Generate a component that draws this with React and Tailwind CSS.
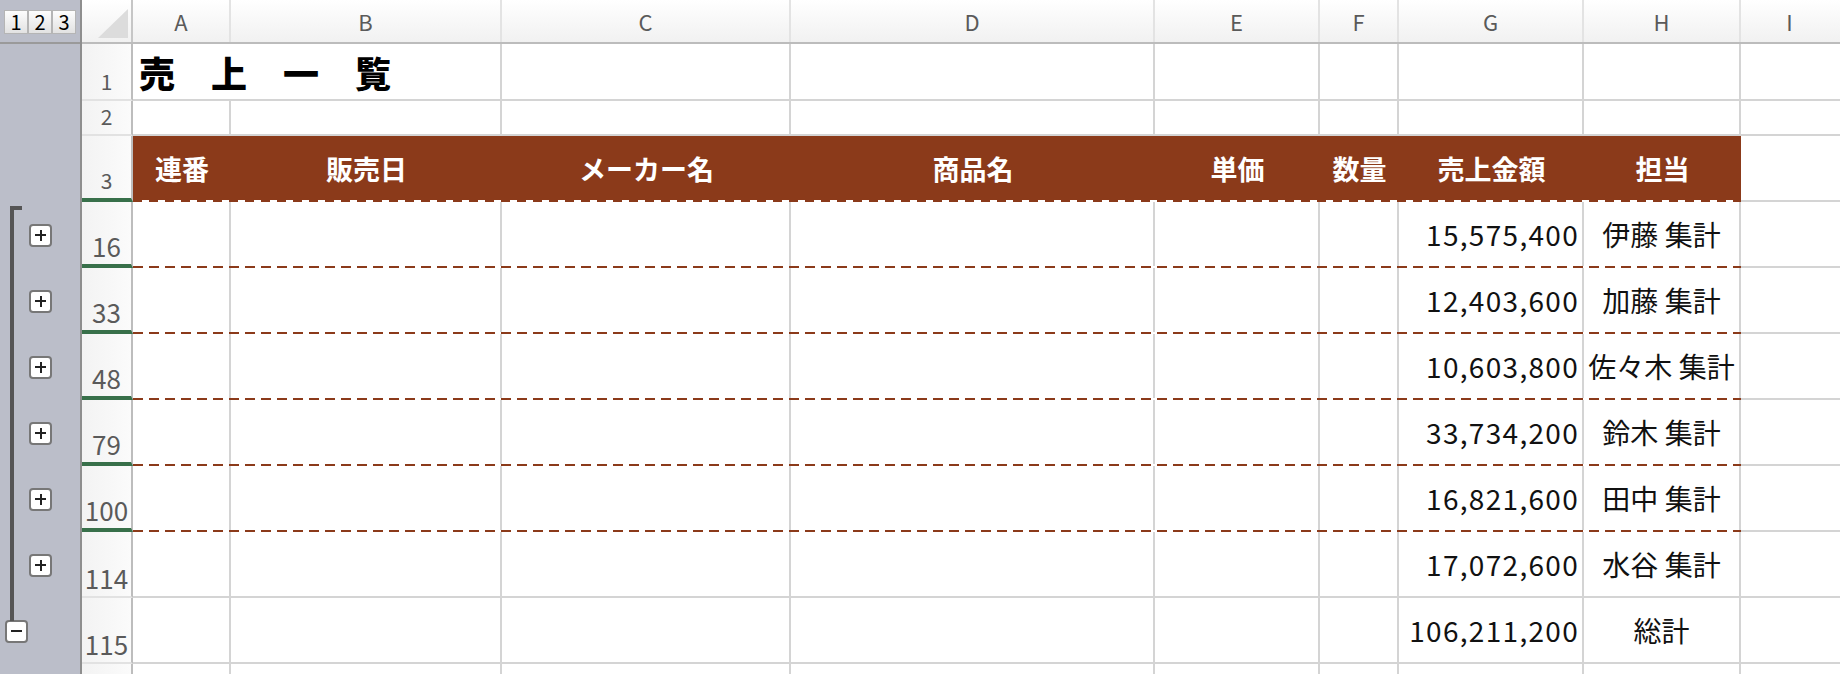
import clsx from "clsx";

const COLS = [
  { w: "w-[98px]", label: "A", head: "連番" },
  { w: "w-[271px]", label: "B", head: "販売日" },
  { w: "w-[289px]", label: "C", head: "メーカー名" },
  { w: "w-[364px]", label: "D", head: "商品名" },
  { w: "w-[165px]", label: "E", head: "単価" },
  { w: "w-[79px]", label: "F", head: "数量" },
  { w: "w-[185px]", label: "G", head: "売上金額" },
  { w: "w-[157px]", label: "H", head: "担当" },
];

const totals = [
  { n: "16", amount: "15,575,400", name: "伊藤 集計", dashed: true },
  { n: "33", amount: "12,403,600", name: "加藤 集計", dashed: true },
  { n: "48", amount: "10,603,800", name: "佐々木 集計", dashed: true },
  { n: "79", amount: "33,734,200", name: "鈴木 集計", dashed: true },
  { n: "100", amount: "16,821,600", name: "田中 集計", dashed: true },
  { n: "114", amount: "17,072,600", name: "水谷 集計", dashed: false },
  { n: "115", amount: "106,211,200", name: "総計", dashed: false },
];

function RowHead({ n, big, green }) {
  return (
    <div
      className={clsx(
        "flex w-[51px] shrink-0 items-end justify-center border-r-2 border-r-[#bdbdbd] bg-linear-to-r from-[#f3f3f3] to-[#fbfbfb] leading-none text-[#5a5a5a]",
        big ? "pb-[5px] text-[26px]" : "pb-[7px] text-[21px]",
        green ? "border-b-4 border-b-[#38704a]" : "border-b-2 border-b-[#e2e2e2]"
      )}
    >
      {n}
    </div>
  );
}

function Line({ kind }) {
  return (
    <div className="flex h-[2px] shrink-0">
      <div
        className={clsx(
          "w-[1608px] shrink-0",
          kind === "dash" && "bg-[repeating-linear-gradient(90deg,#8b3a1a_0_10px,transparent_10px_16px)]",
          kind === "head" && "bg-[repeating-linear-gradient(90deg,#8b3a1a_0_9px,#ffffff_9px_16px)]",
          kind === "gray" && "bg-[#d4d4d4]"
        )}
      />
      <div className="flex-1 bg-[#d4d4d4]" />
    </div>
  );
}

function Row({ n, h, big, green, line = "gray", children }) {
  return (
    <div className={clsx("flex shrink-0", h)}>
      <RowHead n={n} big={big} green={green} />
      <div className="flex flex-1 flex-col">
        <div className="flex flex-1">{children}</div>
        <Line kind={line} />
      </div>
    </div>
  );
}

function Cell({ w, className, children }) {
  return (
    <div className={clsx("flex shrink-0 items-center border-r-2 border-[#d4d4d4]", w, className)}>
      {children}
    </div>
  );
}

function EmptyCells({ from = 0 }) {
  return (
    <>
      {COLS.slice(from).map((c) => (
        <Cell key={c.label} w={c.w} />
      ))}
      <div className="flex-1" />
    </>
  );
}

function OutlineButton({ minus }) {
  return (
    <div className="relative h-[23px] w-[23px] rounded-[4px] border-2 border-[#777] bg-white">
      <div className="absolute left-[4px] top-[8px] h-[2px] w-[11px] bg-[#222]" />
      {!minus && <div className="absolute left-[8.5px] top-[3.5px] h-[11px] w-[2px] bg-[#222]" />}
    </div>
  );
}

function OutlinePanel() {
  return (
    <div className="relative flex w-[82px] shrink-0 flex-col border-r-2 border-[#8e8e8e] bg-[#bbbec9]">
      <div className="flex h-[44px] shrink-0 items-start border-b-2 border-[#9a9a9a] pl-[4px] pt-[10px]">
        {["1", "2", "3"].map((d) => (
          <div
            key={d}
            className="flex h-[24px] w-[24px] items-center justify-center border border-[#b5b5b5] bg-linear-to-b from-[#fdfdfd] to-[#e2e2e2] text-[20px] leading-none text-black"
          >
            {d}
          </div>
        ))}
      </div>
      <div className="h-[158px] shrink-0" />
      {totals.map((t, i) => (
        <div key={t.n} className={clsx("flex h-[66px] shrink-0 pt-[22px]", i === totals.length - 1 ? "pl-[5px]" : "pl-[29px]")}>
          <OutlineButton minus={i === totals.length - 1} />
        </div>
      ))}
      <div className="absolute left-[10px] top-[206px] h-[415px] w-[12px] border-l-4 border-t-4 border-[#555]" />
    </div>
  );
}

function ColumnHeader() {
  return (
    <div className="flex h-[44px] shrink-0 border-b-2 border-[#bcbcbc] bg-linear-to-b from-white to-[#f1f1f1]">
      <div className="flex w-[51px] shrink-0 items-end justify-end border-r-2 border-[#c6c6c6] pb-[4px] pr-[3px]">
        <svg width="30" height="29" viewBox="0 0 30 29">
          <path d="M30 0 L30 29 L0 29 Z" fill="#dcdcdc" />
        </svg>
      </div>
      {COLS.map((c) => (
        <div
          key={c.label}
          className={clsx("flex shrink-0 items-center justify-center border-r-2 border-[#e3e3e3] text-[22px] leading-none text-[#5a5a5a]", c.w)}
        >
          {c.label}
        </div>
      ))}
      <div className="flex flex-1 items-center justify-center pr-[2px] text-[22px] leading-none text-[#5a5a5a]">I</div>
    </div>
  );
}

export default function App() {
  return (
    <div className="flex h-[674px] w-[1840px] overflow-hidden bg-white font-['Noto_Sans_CJK_JP',sans-serif]">
      <OutlinePanel />
      <div className="flex flex-1 flex-col">
        <ColumnHeader />

        <Row n="1" h="h-[57px]">
          <Cell w="w-[369px]" className="whitespace-nowrap pl-[6px] text-[36px] font-black leading-none text-black">
            売　上　一　覧
          </Cell>
          <EmptyCells from={2} />
        </Row>

        <Row n="2" h="h-[35px]">
          <EmptyCells />
        </Row>

        <Row n="3" h="h-[66px]" green line="head">
          <div className="flex w-[1608px] shrink-0 bg-[#8b3a1a]">
            {COLS.map((c) => (
              <div
                key={c.label}
                className={clsx("flex shrink-0 items-center justify-center whitespace-nowrap text-[27px] font-bold leading-none text-white", c.w)}
              >
                {c.head}
              </div>
            ))}
          </div>
          <div className="flex-1" />
        </Row>

        {totals.map((t) => (
          <Row key={t.n} n={t.n} h="h-[66px]" big green={t.dashed} line={t.dashed ? "dash" : "gray"}>
            {COLS.slice(0, 6).map((c) => (
              <Cell key={c.label} w={c.w} />
            ))}
            <Cell w="w-[185px]" className="justify-end pr-[3px] text-[28px] leading-none tracking-[1.3px] text-[#111]">
              {t.amount}
            </Cell>
            <Cell w="w-[157px]" className="justify-center whitespace-nowrap text-[28px] leading-none text-[#111]">
              {t.name}
            </Cell>
            <div className="flex-1" />
          </Row>
        ))}

        <Row n="116" h="h-[66px]" big>
          <EmptyCells />
        </Row>
      </div>
    </div>
  );
}
